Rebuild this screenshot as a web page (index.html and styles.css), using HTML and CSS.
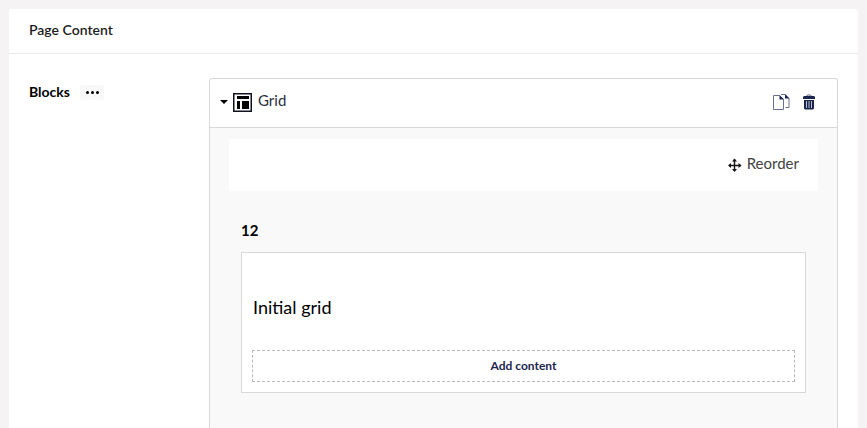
FILE: index.html
```html
<!DOCTYPE html>
<html lang="en">
<head>
<meta charset="utf-8">
<title>Page Content</title>
<link rel="stylesheet" href="styles.css">
</head>
<body>
<section class="panel">
  <header class="panel-header"><span class="panel-title">Page Content</span></header>
  <div class="property">
    <div class="property-label">
      <span class="label-text">Blocks</span>
      <span class="more"><i></i><i></i><i></i></span>
    </div>
    <div class="block">
      <div class="block-header">
        <span class="caret"></span>
        <svg class="layout-icon" width="20" height="20" viewBox="0 0 20 20">
          <path fill="none" stroke="#10131f" stroke-width="1.500" d="M.75.75h17.500v17.500H.75z"/>
          <path fill="#000" d="M4 3h12v3H4zM4 8h3v8H4zM9 8h7v8H9z"/>
        </svg>
        <span class="block-name">Grid</span>
        <svg class="copy-icon" width="17" height="17" viewBox="0 0 17 17" fill="none" stroke="#6a7090">
          <path d="M.5 1.500h6l4 4v10H.5z"/>
          <path d="M8 .5h4l4 4v9h-3.500"/>
          <path fill="#1b264f" stroke="none" d="M6.500 1l4.500 4.500H6.500zM12 0l4.500 4.500H12z"/>
        </svg>
        <svg class="trash-icon" width="12" height="16" viewBox="0 0 12 16">
          <path fill="none" stroke="#5b6282" d="M3.500 2.500l1-1.500h3l1 1.500"/>
          <path fill="#1b264f" d="M1 2h10l1 1v2H0V3zM1 6h10v8.500l-1 1H2l-1-1z"/>
          <path stroke="#b9bdcc" d="M3.500 7v7M6 7v7M8.500 7v7"/>
        </svg>
      </div>
      <div class="block-body">
        <div class="toolbar">
          <svg class="move-icon" width="14" height="14" viewBox="0 0 14 14">
            <path stroke="#151515" stroke-width="1.400" d="M6.500 1v12M1 7.500h12"/>
            <path fill="#151515" d="M6.500 .5l2.500 3h-5zM6.500 14l2.500-3h-5zM0 7.500l3-2.500v5zM13.500 7.500l-3-2.500v5z"/>
          </svg>
          <span class="reorder">Reorder</span>
        </div>
        <div class="area">
          <div class="area-title">12</div>
          <div class="area-box">
            <div class="area-name">Initial grid</div>
            <div class="add"><span>Add content</span></div>
          </div>
        </div>
      </div>
    </div>
  </div>
</section>
</body>
</html>
```

FILE: styles.css
```css
* { box-sizing: border-box; }
body {
  margin: 0;
  height: 428px;
  padding: 9px 9px 0;
  background: #f5f3f4;
  font-family: Lato, "Liberation Sans", sans-serif;
  color: #000;
}
.panel {
  height: 419px;
  background: #fff;
  border-radius: 3px 3px 0 0;
}
.panel-header {
  display: flex;
  align-items: center;
  height: 45px;
  padding: 0 20px 4px;
  border-bottom: 1px solid #e9e9eb;
}
.panel-title {
  font-size: 14px;
  font-weight: 600;
  color: #1c1c22;
}
.property {
  display: flex;
  padding: 24px 20px 0;
}
.property-label {
  display: flex;
  width: 180px;
  height: 28px;
  align-items: center;
  gap: 10px;
}
.label-text {
  margin-top: -2px;
  font-size: 14px;
  font-weight: 700;
}
.more {
  display: flex;
  align-items: center;
  justify-content: center;
  gap: 2px;
  width: 24px;
  height: 15px;
  border-radius: 3px;
  background: #f8f8f8;
}
.more i {
  width: 3px;
  height: 3px;
  border-radius: 50%;
  background: #000;
}
.block {
  width: 629px;
  height: 350px;
  border: 1px solid #d8d7d9;
  border-bottom: 0;
  border-radius: 3px 3px 0 0;
  background: #f9f9f9;
}
.block-header {
  display: flex;
  align-items: center;
  height: 49px;
  padding: 0 22px 1px 10px;
  border-bottom: 1px solid #d8d7d9;
  background: #fff;
  border-radius: 3px 3px 0 0;
}
.caret {
  margin-top: -1px;
  border: 4px solid transparent;
  border-top-color: #000;
  border-bottom: 0;
}
.layout-icon { margin-left: 5px; }
.block-name {
  margin: -5px auto 0 5px;
  font-size: 15px;
  color: #2c3040;
}
.trash-icon {
  margin-top: -1px;
  margin-left: 13px;
}
.block-body { padding: 11px 19px 0; }
.toolbar {
  display: flex;
  align-items: center;
  justify-content: flex-end;
  gap: 5px;
  height: 52px;
  padding-right: 19px;
  background: #fff;
}
.reorder {
  margin-top: -5px;
  font-size: 15px;
  color: #424242;
}
.area { padding: 30px 12px 0; }
.area-title {
  height: 31px;
  font-size: 15px;
  line-height: 18px;
  font-weight: 700;
}
.area-box {
  height: 141px;
  padding: 43px 10px 0;
  border: 1px solid #d8d7d9;
  background: #fff;
}
.area-name {
  height: 54px;
  padding-left: 1px;
  font-size: 18px;
  line-height: 22px;
}
.add {
  display: flex;
  align-items: center;
  justify-content: center;
  height: 32px;
  padding-bottom: 2px;
  border: 1px dashed #bbb;
  font-size: 12px;
  font-weight: 700;
  color: #1b264f;
}
```
